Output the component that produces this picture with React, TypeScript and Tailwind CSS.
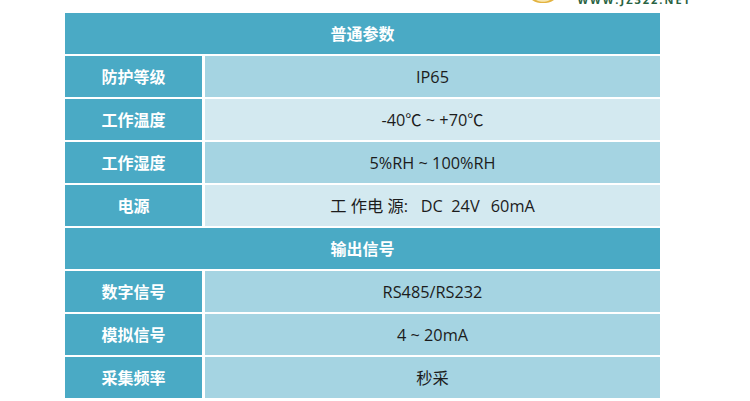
const FONT = "font-['Open_Sans','Noto_Sans_CJK_SC',sans-serif]"

interface Row {
  label?: string
  value: string
  light?: boolean
}

const general: Row[] = [
  { label: '防护等级', value: 'IP65' },
  { label: '工作温度', value: '-40℃ ~ +70℃', light: true },
  { label: '工作湿度', value: '5%RH ~ 100%RH' },
  { label: '电源', value: '工 作电 源:   DC  24V\u2009  60mA', light: true },
]

const output: Row[] = [
  { label: '数字信号', value: 'RS485/RS232' },
  { label: '模拟信号', value: '4 ~ 20mA' },
  { label: '采集频率', value: '秒采' },
]

function SectionHeader({ title }: { title: string }) {
  return (
    <div className="h-[41px] flex items-center justify-center bg-[#4aaac5] text-white text-[16px] font-bold">
      {title}
    </div>
  )
}

function DataRow({ row }: { row: Row }) {
  return (
    <div className="h-[41px] flex gap-[3px]">
      <div className="w-[137px] flex items-center justify-center bg-[#4aaac5] text-white text-[16px] font-bold">
        {row.label}
      </div>
      <div
        className={`flex-1 flex items-center justify-center pt-[1px] text-[16.3px] text-[#1c1c1c] whitespace-pre ${
          row.light ? 'bg-[#d3e9f0]' : 'bg-[#a5d4e2]'
        }`}
      >
        {row.value}
      </div>
    </div>
  )
}

export default function App() {
  return (
    <div className={`w-[750px] h-[401px] overflow-hidden bg-white ${FONT}`}>
      <div className="h-[13px] overflow-hidden flex justify-end pr-[58px] gap-[23px]">
        <svg width="22" height="3" viewBox="0 0 22 3">
          <path d="M0 0 H22 C19 2.500 15 3 11 3 C7 3 3 2.500 0 0 Z" fill="#e3b340" />
          <path d="M4 0 H18 C15 1.500 13 1.800 11 1.800 C9 1.800 7 1.500 4 0 Z" fill="#f8e7b0" />
        </svg>
        <div className="-mt-[6px] h-[12px] leading-[12px] text-[11px] font-bold tracking-[2px] text-[#2a6342]">
          WWW.JZ322.NET
        </div>
      </div>
      <div className="ml-[65px] w-[595px] flex flex-col gap-[2px]">
        <SectionHeader title="普通参数" />
        {general.map(row => (
          <DataRow key={row.label} row={row} />
        ))}
        <SectionHeader title="输出信号" />
        {output.map(row => (
          <DataRow key={row.label} row={row} />
        ))}
      </div>
    </div>
  )
}
